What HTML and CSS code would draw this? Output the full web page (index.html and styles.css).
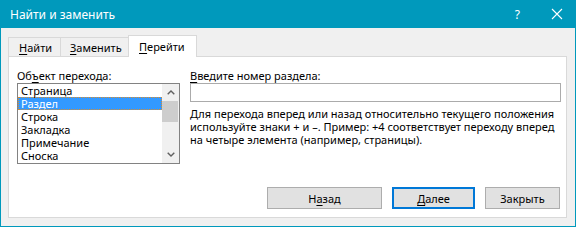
FILE: index.html
```html
<!DOCTYPE html>
<html lang="ru">
<head>
<meta charset="utf-8">
<title>Найти и заменить</title>
<link rel="stylesheet" href="styles.css">
</head>
<body>
<div class="window">
  <div class="titlebar">
    <span class="title">Найти и заменить</span>
    <span class="help">?</span>
    <span class="close"><svg width="12" height="12" viewBox="0 0 12 12"><path d="M1 1 L11 11 M11 1 L1 11" stroke="#ffffff" stroke-width="1.1" fill="none"/></svg></span>
  </div>
  <div class="content">
    <div class="tabs">
      <div class="tab first"><span class="ak">Н</span>айти</div>
      <div class="tab second"><span class="ak">З</span>аменить</div>
      <div class="tab active"><span class="ak">П</span>ерейти</div>
    </div>
    <div class="panel">
      <div class="columns">
        <div class="left">
          <div class="label">Об<span class="ak">ъ</span>ект перехода:</div>
          <div class="listbox">
            <div class="items">
              <div class="item">Страница</div>
              <div class="item selected">Раздел</div>
              <div class="item">Строка</div>
              <div class="item">Закладка</div>
              <div class="item">Примечание</div>
              <div class="item">Сноска</div>
            </div>
            <div class="scrollbar">
              <div class="arrow"><svg width="8" height="5" viewBox="0 0 8 5"><polyline points="0.7,4.3 4,1 7.3,4.3" fill="none" stroke="#606060" stroke-width="1.4"/></svg></div>
              <div class="track"><div class="thumb"></div></div>
              <div class="arrow"><svg width="8" height="5" viewBox="0 0 8 5"><polyline points="0.7,0.7 4,4 7.3,0.7" fill="none" stroke="#606060" stroke-width="1.4"/></svg></div>
            </div>
          </div>
        </div>
        <div class="right">
          <div class="label"><span class="ak">В</span>ведите номер раздела:</div>
          <div class="input"></div>
          <p class="desc">Для перехода вперед или назад относительно текущего положения<br>используйте знаки + и –. Пример: +4 соответствует переходу вперед<br>на четыре элемента (например, страницы).</p>
        </div>
      </div>
      <div class="buttons">
        <div class="btn prev">Н<span class="ak">а</span>зад</div>
        <div class="btn next"><span class="ak">Д</span>алее</div>
        <div class="btn shut">Закрыть</div>
      </div>
    </div>
  </div>
</div>
</body>
</html>
```

FILE: styles.css
```css
* { box-sizing: border-box; }
html, body { margin: 0; padding: 0; }
body {
  width: 576px;
  height: 227px;
  overflow: hidden;
  font-family: "Noto Sans", "Open Sans", sans-serif;
  font-size: 11px;
  line-height: 13px;
  color: #000;
  background: #f0f0f0;
}
.window {
  width: 576px;
  height: 227px;
  border: 1px solid #0099bc;
  border-top: 0;
  background: #f0f0f0;
  display: flex;
  flex-direction: column;
}
.titlebar {
  height: 28px;
  flex: none;
  background: #0099bc;
  color: #fff;
  display: flex;
  align-items: center;
  padding-left: 9px;
}
.title { flex: 1; font-size: 12px; }
.help { font-size: 12px; margin-right: 31px; }
.close { display: flex; margin-right: 12px; }
.content {
  flex: 1;
  padding: 7px 0 0 7px;
  display: flex;
  flex-direction: column;
}
.tabs {
  height: 21px;
  display: flex;
  align-items: flex-end;
  position: relative;
  z-index: 1;
}
.tab {
  height: 19px;
  display: flex;
  align-items: center;
  background: #f0f0f0;
  border: 1px solid #d9d9d9;
  border-bottom: 0;
  padding-top: 1px;
}
.tab.first { width: 53px; padding-left: 10px; }
.tab.second { width: 67px; border-left: 0; border-right: 0; padding-left: 9px; }
.tab.active {
  width: 69px;
  height: 22px;
  margin-bottom: -1px;
  background: #fff;
  padding-left: 10px;
  padding-top: 0;
}
.ak { text-decoration: underline; text-underline-offset: 2px; }
.panel {
  width: 559px;
  height: 162px;
  background: #fff;
  border: 1px solid #d9d9d9;
  padding: 12px 5px 8px 8px;
  display: flex;
  flex-direction: column;
}
.columns { display: flex; gap: 10px; }
.left { width: 163px; }
.right { width: 372px; }
.label { height: 13px; margin-bottom: 1px; }
.listbox {
  height: 81px;
  border: 1px solid #828282;
  display: flex;
}
.items { width: 144px; }
.item { height: 13px; padding-left: 3px; white-space: nowrap; }
.item.selected {
  background: #3399ff;
  color: #fff;
  outline: 1px dotted #d98c2e;
  outline-offset: -1px;
}
.scrollbar {
  width: 17px;
  background: #f0f0f0;
  display: flex;
  flex-direction: column;
}
.arrow {
  height: 17px;
  display: flex;
  align-items: center;
  justify-content: center;
}
.track { flex: 1; }
.thumb { height: 21px; background: #cdcdcd; margin: 0 1px 0 0; }
.input {
  height: 19px;
  border: 1px solid #ababab;
  background: #fff;
}
.desc { margin: 5px 0 0; white-space: nowrap; }
.buttons {
  margin-top: auto;
  display: flex;
  justify-content: flex-end;
  gap: 10px;
  padding-right: 1px;
}
.btn {
  height: 22px;
  display: flex;
  align-items: center;
  justify-content: center;
  background: #e1e1e1;
  border: 1px solid #adadad;
}
.btn.prev { width: 115px; }
.btn.next { width: 83px; border: 2px solid #0078d7; }
.btn.shut { width: 75px; }
```
